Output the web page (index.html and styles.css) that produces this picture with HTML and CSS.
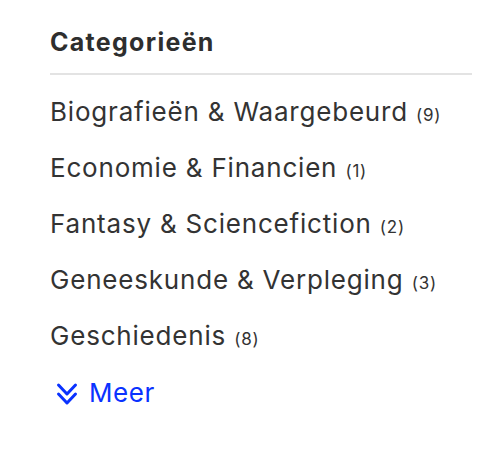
FILE: index.html
```html
<!DOCTYPE html>
<html lang="nl">
<head>
<meta charset="utf-8">
<link rel="stylesheet" href="styles.css">
</head>
<body>
<section class="facet">
  <h2 class="facet-title">Categorieën</h2>
  <ul class="facet-list">
    <li class="facet-item"><a class="facet-link" href="#">Biografieën &amp; Waargebeurd</a> <span class="count">(9)</span></li>
    <li class="facet-item"><a class="facet-link" href="#">Economie &amp; Financien</a> <span class="count">(1)</span></li>
    <li class="facet-item"><a class="facet-link" href="#">Fantasy &amp; Sciencefiction</a> <span class="count">(2)</span></li>
    <li class="facet-item"><a class="facet-link" href="#">Geneeskunde &amp; Verpleging</a> <span class="count">(3)</span></li>
    <li class="facet-item"><a class="facet-link" href="#">Geschiedenis</a> <span class="count">(8)</span></li>
  </ul>
  <a class="more" href="#">
    <svg class="more-icon" width="22" height="25" viewBox="0 0 22 25" fill="none" stroke="currentColor" stroke-width="3" stroke-linecap="round" stroke-linejoin="round"><path d="M2.5 3l8.5 9 8.5-9"/><path d="M2.5 12l8.5 9 8.5-9"/></svg>
    <span>Meer</span>
  </a>
</section>
</body>
</html>
```
FILE: styles.css
```css
html, body { margin: 0; padding: 0; background: #fff; }
body { font-family: Inter, "Liberation Sans", sans-serif; color: #333; }
.facet { padding: 22px 24px 0 50px; }
.facet-title {
  margin: 0;
  font-size: 25px;
  font-weight: 700;
  letter-spacing: 1.3px;
  line-height: 40px;
  color: #2e2e2e;
  padding-bottom: 11px;
  border-bottom: 2px solid #e3e3e3;
}
.facet-list { list-style: none; margin: 0; padding: 9px 0 0; }
.facet-item { font-size: 26px; letter-spacing: 0.8px; line-height: 56px; height: 56px; }
.facet-link { color: #333; text-decoration: none; }
.count { font-size: 17px; letter-spacing: 0.8px; color: #333; }
.more { display: inline-flex; align-items: center; gap: 11px; color: #0a32ff; text-decoration: none; font-size: 26px; letter-spacing: 0.6px; margin-left: 6px; margin-top: 13px; }
.more-icon { display: block; margin-top: 3px; }
```
